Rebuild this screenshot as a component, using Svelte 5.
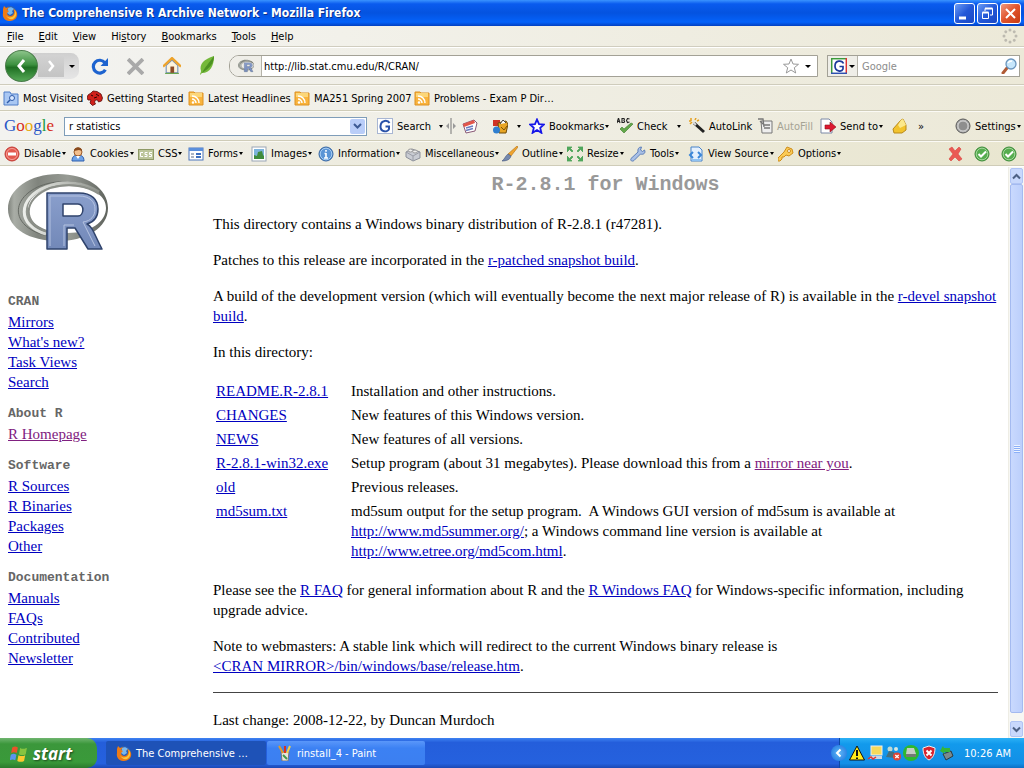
<script lang="ts">
	type Item = { icon?: string; label?: string; arrow?: boolean; muted?: boolean };

	const menus = ['File', 'Edit', 'View', 'History', 'Bookmarks', 'Tools', 'Help'];
	const menuKeys = [0, 0, 0, 2, 0, 0, 0];

	const bookmarks: Item[] = [
		{ icon: 'visited', label: 'Most Visited' },
		{ icon: 'dragon', label: 'Getting Started' },
		{ icon: 'feed', label: 'Latest Headlines' },
		{ icon: 'feed', label: 'MA251 Spring 2007' },
		{ icon: 'feed', label: 'Problems - Exam P Dir…' }
	];

	const googleTools: Item[] = [
		{ icon: 'google', label: 'Search' },
		{ arrow: true },
		{ icon: 'splitter' },
		{ icon: 'news' },
		{ icon: 'popup' },
		{ arrow: true },
		{ icon: 'star', label: 'Bookmarks', arrow: true },
		{ icon: 'check', label: 'Check' },
		{ arrow: true },
		{ icon: 'wand', label: 'AutoLink' },
		{ icon: 'fill', label: 'AutoFill', muted: true },
		{ icon: 'send', label: 'Send to', arrow: true },
		{ icon: 'marker' },
		{ label: '»' },
		{ icon: 'settings', label: 'Settings', arrow: true }
	];

	const devTools: Item[] = [
		{ icon: 'disable', label: 'Disable', arrow: true },
		{ icon: 'cookies', label: 'Cookies', arrow: true },
		{ icon: 'css', label: 'CSS', arrow: true },
		{ icon: 'forms', label: 'Forms', arrow: true },
		{ icon: 'images', label: 'Images', arrow: true },
		{ icon: 'info', label: 'Information', arrow: true },
		{ icon: 'misc', label: 'Miscellaneous', arrow: true },
		{ icon: 'outline', label: 'Outline', arrow: true },
		{ icon: 'resize', label: 'Resize', arrow: true },
		{ icon: 'tools', label: 'Tools', arrow: true },
		{ icon: 'source', label: 'View Source', arrow: true },
		{ icon: 'options', label: 'Options', arrow: true },
		{ icon: 'cross' },
		{ icon: 'ok' },
		{ icon: 'ok' }
	];

	const navGroups = [
		{ title: 'CRAN', links: ['Mirrors', "What's new?", 'Task Views', 'Search'] },
		{ title: 'About R', links: ['R Homepage'] },
		{ title: 'Software', links: ['R Sources', 'R Binaries', 'Packages', 'Other'] },
		{ title: 'Documentation', links: ['Manuals', 'FAQs', 'Contributed', 'Newsletter'] }
	];

	const trayIcons = ['warning', 'network', 'people', 'drive', 'shield', 'eject'];

	let url = $state('http://lib.stat.cmu.edu/R/CRAN/');
	let query = $state('r statistics');
	let search = $state('');

	const icons: Record<string, string> = {
		firefox:
			'<circle cx="8" cy="8" r="7" fill="#2b5fb4"/><path d="M6 3c2-1 4-1 6 1l-2 2 1 2-3 2-3-2z" fill="#79b8ee"/><path d="M1 4l1-3 2 2 3-1-2 3 2 1-2 2c0 3 4 4 6 2 2-2 1-5 0-6 3 1 5 4 4 7-1 4-5 5-8 5-4 0-7-4-6-8z" fill="#ee7b15"/><path d="M12 4c2 3 1 7-2 8-3 1-5 0-6-2 1 3 4 5 7 4 4-2 4-7 1-10z" fill="#fbc83a"/>',
		visited:
			'<path d="M1 2h6l1 2h7v11H1z" fill="#a9c7f3" stroke="#4e7cc7"/><circle cx="9" cy="8" r="2.5" fill="#d9e8ff" stroke="#2f5ba9"/><path d="M7 10l-3 3" stroke="#2f5ba9" stroke-width="1.5"/>',
		dragon:
			'<path d="M1 5l3-2 2-2 4 .5L14 4l1.500 4-1 3-3 1-1-2-2 0-1 2 1 2-3 1.500L3 13l1-3H1L0 8z" fill="#d0201a" stroke="#5d0b08" stroke-width=".8"/><path d="M9 4l3 2M4 5l2 1M7 8l3-1" stroke="#2a0302" fill="none"/>',
		feed: '<path d="M1 2h5l1 1h8v12H1z" fill="#f9b33c" stroke="#dc9224"/><path d="M2 3h12v4H2z" fill="#fcd678"/><path d="M4 6c4 0 7 3 7 7M4 9c2 0 4 2 4 4" stroke="#fff" stroke-width="1.5" fill="none"/><circle cx="5" cy="12.5" r="1.2" fill="#fff"/>',
		google:
			'<rect x=".5" y=".5" width="15" height="15" fill="#fff" stroke="#a8b6d3"/><path d="M12.500 5C11 2 4 1.500 3.500 8S11 14.500 12 11V8.500H8.500" fill="none" stroke="#2a52a8" stroke-width="2"/>',
		engine:
			'<rect x=".5" y=".5" width="15" height="15" fill="#fff"/><path d="M0 .7h16" stroke="#3b9a3b" stroke-width="1.500"/><path d="M.7 0v16" stroke="#3b9a3b" stroke-width="1.500"/><path d="M15.300 0v16" stroke="#d33" stroke-width="1.500"/><path d="M0 15.300h16" stroke="#2e50b0" stroke-width="1.500"/><path d="M12.500 5.500C11 2 4 2 4 8S11 14 12 11V8.500H8.500" fill="none" stroke="#1d3a9c" stroke-width="1.700"/>',
		splitter:
			'<path d="M8 0v16" stroke="#777"/><path d="M6 5v6L3 8zM10 5v6l3-3z" fill="#999"/>',
		news: '<path d="M1 6l11-4 3 3-2 8-9 2z" fill="#fff" stroke="#8a5a76"/><path d="M1 6l11-4 1 3-11 4z" fill="#e2564a"/><path d="M4 10l7-2M4 12.500l7-2" stroke="#6a7cc0" stroke-width="1.500"/>',
		popup:
			'<path d="M1 2h7v6H1z" fill="#cf3425"/><path d="M6 5l8-2 2 3-2 9H7z" fill="#e8a524" stroke="#6f4a08"/><path d="M8 6l3-4 3 3" fill="#fff" stroke="#444"/><circle cx="4.500" cy="12" r="3.500" fill="#2f7fd0"/><path d="M9 9l3 3 3-4" stroke="#7d5207" fill="none"/>',
		star: '<path d="M8 1.500l2 4.700 5 .3-3.800 3.300 1.200 5L8 12l-4.400 2.800 1.200-5L1 6.500l5-.3z" fill="#fff" stroke="#1616e8" stroke-width="1.800"/>',
		check:
			'<path d="M0 5L1.500 0 3 5M.7 3.500h2M5 .5v4h2l.6-1-.7-1 .5-1L7 .5zM12.500 1l-2-.5L9.500 2.500l1 2 2-.5" fill="none" stroke="#222" stroke-width="1.100"/><path d="M3 11l4 4 9-9-2-1-7 6-2-2z" fill="#63a84a" stroke="#3b7a2c" stroke-width=".6"/>',
		wand: '<path d="M5 5l10 9" stroke="#222" stroke-width="3"/><path d="M4 4l3 3" stroke="#ddd" stroke-width="2"/><path d="M2 0v3M1 6l2-2M7 0L6 2M0 3h2M8 3l2-1" stroke="#e5a01f" stroke-width="1.500"/>',
		fill: '<path d="M4 3h11v12H5z" fill="#eee" stroke="#777"/><path d="M1 1h5l1 8M3 3l3 3M7 7h6M7 10h6" stroke="#777" fill="none" stroke-width="1.300"/>',
		send: '<path d="M1 1h8l3 3v11H1z" fill="#fff" stroke="#7d89a6"/><path d="M5 7h5V4l6 5-6 5v-3H5z" fill="#dc1830" stroke="#90101c" stroke-width=".6"/>',
		marker:
			'<path d="M1 11l8-9 2-1 3 6v5l-4 3H2z" fill="#f2c32e" stroke="#b9891b"/><path d="M9 2l2-1 3 6-6 3-2-3z" fill="#fbe88c"/>',
		settings:
			'<circle cx="8" cy="8" r="7" fill="#b4b4b4" stroke="#555"/><circle cx="8" cy="8" r="5" fill="#8e8e8e" stroke="#d5d5d5"/>',
		disable:
			'<circle cx="8" cy="8" r="7" fill="#e4594e" stroke="#c23a33"/><circle cx="8" cy="8" r="5.500" fill="none" stroke="#f5a199"/><rect x="4" y="6.500" width="8" height="3" fill="#fff"/>',
		cookies:
			'<path d="M2 15c0-5 3-6 6-6s6 1 6 6z" fill="#6fa3e8" stroke="#2e5fae"/><circle cx="8" cy="6" r="4" fill="#f3bf8d" stroke="#9c5a27"/><path d="M4 5c0-5 8-5 8 0l-3-1z" fill="#8a4a1d"/><path d="M6 10l2 3 2-3" fill="#fff"/>',
		css: '<rect x=".5" y="3.500" width="15" height="10" fill="#bcc59a" stroke="#8f9a67"/><path d="M5 6.500H2.500v4H5M9.500 6.500H7v2h2v2H6.500M14 6.500h-2.500v2h2v2H11" fill="none" stroke="#fff"/>',
		forms:
			'<rect x="1" y="2" width="14" height="12" fill="#fff" stroke="#4c76bd"/><path d="M1 2h14v3H1z" fill="#5b8fdc"/><path d="M3 8h3M3 11h3" stroke="#5a6a88"/><path d="M8 8h5M8 11h5" stroke="#3f70bf" stroke-width="2"/>',
		images:
			'<rect x="1" y="1" width="14" height="14" fill="#fff" stroke="#9aa6b5"/><rect x="3" y="3" width="10" height="10" fill="#7db4dc"/><path d="M3 13V9l3 1 1-4 4-1 1 4 1 1v3z" fill="#3f8b3c"/>',
		info: '<circle cx="8" cy="8" r="7" fill="#5b95d6" stroke="#34639f"/><circle cx="8" cy="8" r="5.800" fill="none" stroke="#a8cdf2"/><path d="M8 4v1.800M8 7v5M6.500 7.500H8M6 12h4" stroke="#fff" stroke-width="1.600"/>',
		misc: '<path d="M1 6l6-3 8 3v6l-7 3-7-4z" fill="#c9ccd3" stroke="#8b8f99"/><path d="M1 6l7 4 7-4M8 10v5" fill="none" stroke="#9a9da6"/><ellipse cx="5.500" cy="4.500" rx="2.300" ry="1.500" fill="#eee" stroke="#999"/><ellipse cx="10" cy="5.500" rx="2.300" ry="1.500" fill="#eee" stroke="#999"/>',
		outline:
			'<path d="M15 0l1 1-7 9-3-2z" fill="#f0a52e" stroke="#b06d12" stroke-width=".6"/><path d="M6 8l3 2c-1 4-5 5-9 5 3-2 3-5 6-7z" fill="#7689ad" stroke="#44567d" stroke-width=".6"/>',
		resize:
			'<path d="M0 1h5L3.500 2.500 6 5 5 6 2.500 3.500 0 6zM16 1h-5l1.500 1.500L10 5l1 1 2.500-2.500L16 6zM0 15h5l-1.500-1.500L6 11l-1-1-2.500 2.500L0 10zM16 15h-5l1.500-1.500L10 11l1-1 2.500 2.500L16 10z" fill="#4fa65a" stroke="#4fa65a" stroke-width=".8"/>',
		tools:
			'<path d="M14.500 4l-2 1.500L10.500 4l1-3C8.500 1 7.500 3 8 6l-7 6.500c-1 2 1 3.500 3 2L10.500 8c3 1 5.500-1 4-4z" fill="#a9c0e6" stroke="#5d7fb8"/>',
		source:
			'<path d="M3 1h8l3 3v11H3z" fill="#e4f0fd" stroke="#4983c9"/><path d="M5 6L2 9l3 3M10 6l3 3-3 3" fill="none" stroke="#3a86d8" stroke-width="2"/><path d="M4 14h9" stroke="#8fc2f2" stroke-width="2"/>',
		options:
			'<path d="M9 1l5 2 1 4-4 3-3-1-2 2H4v2l-2 2H0v-3l6-6z" fill="#fbcb55" stroke="#ce8d1b"/><circle cx="11" cy="5" r="1.500" fill="#fff" stroke="#ce8d1b"/>',
		cross: '<path d="M2 3l3-2 3 4 4-4 2 2-3 5 4 5-3 2-4-4-4 4-2-2 4-5z" fill="#ea5a54" stroke="#d8423e" stroke-width=".6"/>',
		ok: '<circle cx="8" cy="8" r="7" fill="#56ad4f" stroke="#3b8a38"/><circle cx="8" cy="8" r="5.800" fill="none" stroke="#a3d69b"/><path d="M4.500 8l2.500 2.500 5-5" fill="none" stroke="#fff" stroke-width="2"/>',
		reload:
			'<path d="M13 4.500A6 6 0 1 0 13.500 11" fill="none" stroke="#1d63cf" stroke-width="3"/><path d="M9 7.500h7V0z" fill="#1d63cf"/>',
		stop: '<path d="M1 1l14 14M15 1L1 15" stroke="#a9a9a9" stroke-width="3.500"/>',
		home: '<path d="M3 8v7h11V8L8.500 3z" fill="#fdf3dc" stroke="#6f8db8"/><path d="M0 9l8.500-8L17 9" fill="none" stroke="#eda32b" stroke-width="2.200"/><rect x="7" y="9" width="3.500" height="6" fill="#8b4b28"/><path d="M2 15.500h13" stroke="#65a546"/>',
		leaf: '<path d="M15 0C5 3 0 8 2 15c0 2-1 2-1 4l2-2c8 0 12-7 12-17z" fill="#74b83a"/><path d="M15 0c0 7-4 12-12 17C6 11 10 7 15 0z" fill="#4c9122"/>',
		favstar:
			'<path d="M8 1l2 5 5.500.3-4.200 3.400 1.400 5.300L8 12l-4.700 3 1.400-5.300L.5 6.300 6 6z" fill="#fff" stroke="#999"/>',
		lens: '<path d="M6 10l-4 5" stroke="#b05b36" stroke-width="3" stroke-linecap="round"/><circle cx="10" cy="6" r="5" fill="#c6e6fb" stroke="#6b95bd" stroke-width="1.300"/><path d="M7 5c1-2 3-2 4-2" stroke="#fff" stroke-width="1.500" fill="none"/>',
		paint:
			'<path d="M4 7h8l-1 9H5z" fill="#e8e4da" stroke="#777"/><path d="M6 8L2 1" stroke="#e29b26" stroke-width="2"/><path d="M8 8V1" stroke="#d63226" stroke-width="2"/><path d="M10 8l3-7" stroke="#f0d04b" stroke-width="2"/><path d="M6 10l4 4" stroke="#3f9a4c" stroke-width="2"/>',
		windows:
			'<path d="M2 3c2-1 3-1 5 0L6 8c-2-1-3-1-5 0z" fill="#e9532a"/><path d="M9 3.500c2 1 3 1 6 0L14 9c-2 1-4 1-6 0z" fill="#86c440"/><path d="M.7 9.500c2-1 3-1 5 0l-1 5c-2-1-3-1-5 0z" fill="#5b94ef"/><path d="M7.500 10c2 1 4 1 6 0l-1 5c-2 1-4 1-6 0z" fill="#fcc92f"/>',
		warning:
			'<path d="M8 1l7.500 14H.5z" fill="#ffec1a" stroke="#111"/><path d="M8 5v6M8 12.500V14" stroke="#111" stroke-width="2"/>',
		network:
			'<rect x="4" y="1" width="11" height="9" fill="#f5d95a" stroke="#eee"/><path d="M3 11h12v3H3z" fill="#cfd6e0"/><path d="M1 14l3-2 2 2 3-2" stroke="#d33" fill="none" stroke-width="1.500"/>',
		people:
			'<circle cx="5" cy="4" r="2.500" fill="#bcd9d5"/><path d="M1 12l3-6 5 1 1 6z" fill="#44707d"/><circle cx="11" cy="4" r="2" fill="#d6e9e2"/><circle cx="12" cy="11.500" r="4" fill="#e14635"/><path d="M10.300 10l3.400 3M13.700 10l-3.400 3" stroke="#fff" stroke-width="1.300"/>',
		drive:
			'<circle cx="8" cy="8" r="8" fill="#2eb82e"/><path d="M4 3h7l2 6H3z" fill="#c7ccc5"/><path d="M3 9h10v3H3z" fill="#737a74"/>',
		shield:
			'<path d="M8 1l6 2c0 6-2 10-6 12C4 13 2 9 2 3z" fill="#d8232f" stroke="#eee"/><path d="M5.500 5.500l5 5M10.500 5.500l-5 5" stroke="#fff" stroke-width="2"/>',
		eject:
			'<path d="M4 9l8-3 2 5-7 4z" fill="#7b8a8d" stroke="#2d3a3d"/><path d="M1 6l3-5 1 2h6v4H5l1 2z" fill="#34b53a"/>'
	};
</script>

{#snippet icon(name: string, size = 16)}
	<svg width={size} height={size} viewBox="0 0 16 16" aria-hidden="true">
		{@html icons[name]}
	</svg>
{/snippet}

{#snippet tool(item: Item)}
	<button class="tool" class:muted={item.muted} aria-label={item.label ?? item.icon ?? 'More'}>
		{#if item.icon}{@render icon(item.icon)}{/if}
		{#if item.label || item.arrow}
			<span class="tool-text">{item.label ?? ''}{#if item.arrow}<i class="arrow"></i>{/if}</span>
		{/if}
	</button>
{/snippet}

{#snippet rLogo()}
	<defs>
		<linearGradient id="ring" x1="0" y1="0" x2="1" y2="0">
			<stop offset="0" stop-color="#7f837c" />
			<stop offset="0.06" stop-color="#a9ada6" />
			<stop offset="0.3" stop-color="#80847d" />
			<stop offset="0.6" stop-color="#979b94" />
			<stop offset="1" stop-color="#5f635d" />
		</linearGradient>
		<linearGradient id="shine" x1="0" y1="0" x2="1" y2="0">
			<stop offset="0" stop-color="#eceeea" />
			<stop offset="0.5" stop-color="#c2c5bf" />
			<stop offset="1" stop-color="#8d918a" />
		</linearGradient>
		<linearGradient id="face" x1="0" y1="0" x2="0" y2="1">
			<stop offset="0" stop-color="#8a9fcc" />
			<stop offset="1" stop-color="#7288b8" />
		</linearGradient>
	</defs>
	<path
		d="M50 0C22 0 0 15 0 35s22 32 50 32 50-13 50-33S78 0 50 0zM58 12c24 0 40 8 40 22S82 59 60 59 20 50 20 36 35 12 58 12z"
		fill="url(#ring)"
		fill-rule="evenodd"
	/>
	<path d="M40 62C3 54 1 25 32 12 50 5 74 6 92 18" fill="none" stroke="#666a64" />
	<path d="M38 60C9 52 9 24 38 13 56 6 76 8 91 18" fill="none" stroke="url(#shine)" stroke-width="3" />
	<path d="M40 58C14 50 14 25 42 14 60 9 78 11 91 20" fill="none" stroke="#8b8f88" stroke-width="2" />
	<path
		d="M39 19h32c13 0 19 7 19 16 0 8-4 13-11 15 6 3 7 10 15 25H80L67 54h-8v21H39zM55 30v12h15c6 0 7-12 0-12z"
		fill="url(#face)"
		stroke="#2f436c"
		stroke-width="1.500"
		stroke-linejoin="round"
		fill-rule="evenodd"
	/>
	<path d="M42 72V22h29c11 0 16 6 16 13 0 7-4 12-12 13l12 24M56 72V51h10" fill="none" stroke="#b4c2e0" />
{/snippet}

<div class="desktop">
	<header class="titlebar">
		{@render icon('firefox')}
		<h1>The Comprehensive R Archive Network - Mozilla Firefox</h1>
		<div class="window-buttons">
			<button aria-label="Minimize">
				<svg width="19" height="19" viewBox="0 0 19 19"><path d="M4 14h7" stroke="#fff" stroke-width="3" /></svg>
			</button>
			<button aria-label="Restore">
				<svg width="19" height="19" viewBox="0 0 19 19" fill="none" stroke="#fff">
					<path d="M7 7V4.500h7.500V11H12" /><path d="M7 4.500h7.500" stroke-width="2" />
					<path d="M4.500 8.500h6v6h-6z" /><path d="M4.500 8.500h6" stroke-width="2" />
				</svg>
			</button>
			<button class="close" aria-label="Close">
				<svg width="19" height="19" viewBox="0 0 19 19"><path d="M5 5l9 9M14 5l-9 9" stroke="#fff" stroke-width="2" /></svg>
			</button>
		</div>
	</header>

	<nav class="menubar">
		{#each menus as menu, i}
			<button>{menu.slice(0, menuKeys[i])}<u>{menu[menuKeys[i]]}</u>{menu.slice(menuKeys[i] + 1)}</button>
		{/each}
		<svg class="throbber" width="16" height="16" viewBox="0 0 16 16" fill="#bdbab0" aria-hidden="true">
			{#each [0, 45, 90, 135, 180, 225, 270, 315] as angle}
				<circle cx="8" cy="2" r="1.500" transform="rotate({angle} 8 8)" />
			{/each}
		</svg>
	</nav>

	<div class="navbar">
		<div class="history">
			<button class="back" aria-label="Back">
				<svg width="16" height="16" viewBox="0 0 16 16"><path d="M10 2L5 8l5 6" fill="none" stroke="#fff" stroke-width="3" /></svg>
			</button>
			<button class="forward" aria-label="Forward">
				<svg width="12" height="12" viewBox="0 0 12 12"><path d="M4 1l4 5-4 5" fill="none" stroke="#fff" stroke-width="2.500" /></svg>
			</button>
			<button class="recent" aria-label="Recent pages"><i class="arrow"></i></button>
		</div>
		<div class="nav-buttons">
			<button aria-label="Reload">{@render icon('reload', 17)}</button>
			<button aria-label="Stop">{@render icon('stop', 17)}</button>
			<button aria-label="Home">
				<svg width="18" height="18" viewBox="0 0 17 17" aria-hidden="true">{@html icons.home}</svg>
			</button>
			<button aria-label="Leaf">
				<svg width="16" height="20" viewBox="0 0 16 20" aria-hidden="true">{@html icons.leaf}</svg>
			</button>
		</div>
		<div class="location">
			<span class="site">
				<svg width="16" height="14" viewBox="0 0 100 78" aria-hidden="true">{@render rLogo()}</svg>
			</span>
			<input aria-label="Location" bind:value={url} />
			<button aria-label="Bookmark this page">{@render icon('favstar')}</button>
			<button class="drop" aria-label="Show history"><i class="arrow"></i></button>
		</div>
		<div class="search">
			<button class="engine" aria-label="Search engine">{@render icon('engine')}<i class="arrow"></i></button>
			<input aria-label="Web search" placeholder="Google" bind:value={search} />
			<button aria-label="Search">{@render icon('lens')}</button>
		</div>
	</div>

	<div class="bar bookmarks">
		{#each bookmarks as item}
			{@render tool(item)}
		{/each}
	</div>

	<div class="bar google">
		<a class="google-logo" href="#google" aria-label="Google">
			<span>G</span><span class="red">o</span><span class="yellow">o</span><span>g</span><span class="green">l</span><span class="red">e</span>
		</a>
		<div class="combo">
			<input aria-label="Google search" bind:value={query} />
			<button aria-label="Previous searches">
				<svg width="9" height="7" viewBox="0 0 9 7"><path d="M1 1l3.500 3.500L8 1" fill="none" stroke="#3d5a94" stroke-width="2" /></svg>
			</button>
		</div>
		{#each googleTools as item}
			{@render tool(item)}
		{/each}
	</div>

	<div class="bar dev">
		{#each devTools as item}
			{@render tool(item)}
		{/each}
	</div>

	<div class="viewport">
		<aside>
			<svg class="r-logo" width="100" height="78" viewBox="0 0 100 78" role="img" aria-label="R">
				{@render rLogo()}
			</svg>
			{#each navGroups as group}
				<section>
					<h3>{group.title}</h3>
					{#each group.links as link}
						<div><a href="#{link}" class:visited={link === 'R Homepage'}>{link}</a></div>
					{/each}
				</section>
			{/each}
		</aside>

		<main>
			<h2>R-2.8.1 for Windows</h2>
			<p>This directory contains a Windows binary distribution of R-2.8.1 (r47281).</p>
			<p>Patches to this release are incorporated in the <a href="#patched">r-patched snapshot build</a>.</p>
			<p>
				A build of the development version (which will eventually become the next major release of R)
				is available in the <a href="#devel">r-devel snapshot build</a>.
			</p>
			<p>In this directory:</p>
			<table>
				<tbody>
					<tr>
						<td><a href="#readme">README.R-2.8.1</a></td>
						<td>Installation and other instructions.</td>
					</tr>
					<tr>
						<td><a href="#changes">CHANGES</a></td>
						<td>New features of this Windows version.</td>
					</tr>
					<tr>
						<td><a href="#news">NEWS</a></td>
						<td>New features of all versions.</td>
					</tr>
					<tr>
						<td><a href="#exe">R-2.8.1-win32.exe</a></td>
						<td>
							Setup program (about 31 megabytes). Please download this from a
							<a class="visited" href="#mirror">mirror near you</a>.
						</td>
					</tr>
					<tr>
						<td><a href="#old">old</a></td>
						<td>Previous releases.</td>
					</tr>
					<tr>
						<td><a href="#md5">md5sum.txt</a></td>
						<td>
							md5sum output for the setup program.&nbsp; A Windows GUI version of md5sum is available at<br />
							<a href="#summer">http://www.md5summer.org/</a>; a Windows command line version is available at<br />
							<a href="#etree">http://www.etree.org/md5com.html</a>.
						</td>
					</tr>
				</tbody>
			</table>
			<p>
				Please see the <a href="#faq">R FAQ</a> for general information about R and the
				<a href="#winfaq">R Windows FAQ</a> for Windows-specific information, including upgrade advice.
			</p>
			<p>
				Note to webmasters: A stable link which will redirect to the current Windows binary release
				is<br />
				<a href="#release">&lt;CRAN MIRROR&gt;/bin/windows/base/release.htm</a>.
			</p>
			<hr />
			<p class="changed">Last change: 2008-12-22, by Duncan Murdoch</p>
		</main>

		<div class="scrollbar" aria-hidden="true">
			<span class="step">
				<svg width="9" height="7" viewBox="0 0 9 7"><path d="M1 5.500L4.500 2 8 5.500" fill="none" stroke="#4d6185" stroke-width="2" /></svg>
			</span>
			<span class="thumb"></span>
			<span class="step">
				<svg width="9" height="7" viewBox="0 0 9 7"><path d="M1 1.500L4.500 5 8 1.500" fill="none" stroke="#4d6185" stroke-width="2" /></svg>
			</span>
		</div>
	</div>

	<footer class="taskbar">
		<button class="start">{@render icon('windows', 18)}start</button>
		<div class="tasks">
			<button class="task active">{@render icon('firefox')}The Comprehensive …</button>
			<button class="task">{@render icon('paint')}rinstall_4 - Paint</button>
		</div>
		<div class="tray">
			<button class="expand" aria-label="Show hidden icons">
				<svg width="16" height="16" viewBox="0 0 16 16"><path d="M9.500 4.500L6 8l3.500 3.500" fill="none" stroke="#fff" stroke-width="2" /></svg>
			</button>
			{#each trayIcons as name}
				{@render icon(name)}
			{/each}
			<time>10:26 AM</time>
		</div>
	</footer>
</div>

<style>
	:global(body) {
		margin: 0;
	}

	.desktop {
		display: flex;
		flex-direction: column;
		min-height: 100vh;
		font-family: 'DejaVu Sans Condensed', 'Noto Sans', sans-serif;
		font-size: 11px;
		color: #000;
		background: #fff;
		white-space: nowrap;
	}

	button,
	input {
		margin: 0;
		padding: 0;
		border: 0;
		background: none;
		font: inherit;
		color: inherit;
		min-width: 0;
	}

	input {
		outline: none;
	}

	svg {
		display: block;
		flex: none;
	}

	.arrow {
		display: block;
		flex: none;
		width: 0;
		margin: 0 auto;
		border: 3px solid transparent;
		border-top-color: #000;
		border-bottom: 0;
	}

	/* window frame */
	.titlebar {
		display: flex;
		align-items: center;
		gap: 4px;
		box-sizing: border-box;
		height: 26px;
		padding: 0 3px 0 2px;
		color: #fff;
		background: linear-gradient(#3a93ff, #0a5bee 15%, #0453e0 50%, #0462fa 85%, #0340c0);
	}

	h1 {
		flex: 1;
		margin: 0;
		font-size: 12px;
		font-weight: bold;
		text-shadow: 1px 1px #0a2f8c;
	}

	.window-buttons {
		display: flex;
		gap: 2px;
	}

	.window-buttons button {
		border: 1px solid #fff;
		border-radius: 3px;
		background: linear-gradient(135deg, #6b9cf5, #2358d8 50%, #1a48c4);
	}

	.window-buttons .close {
		background: linear-gradient(135deg, #f09a80, #e0532b 50%, #c63a12);
	}

	.menubar {
		display: flex;
		align-items: center;
		gap: 15px;
		height: 20px;
		padding: 0 6px 0 7px;
		border-bottom: 1px solid #d0cdbf;
		background: linear-gradient(90deg, #f5f5f3, #ece9d8);
	}

	.throbber {
		margin-left: auto;
	}

	.navbar {
		display: flex;
		align-items: center;
		box-sizing: border-box;
		height: 38px;
		padding: 0 4px 0 5px;
		border-top: 1px solid #fff;
		border-bottom: 1px solid #cfccbc;
		background: linear-gradient(90deg, #f3f3f1, #ece9d8);
	}

	.history {
		display: flex;
		align-items: center;
		height: 26px;
		margin-right: 12px;
		border-radius: 16px 10px 10px 16px;
		background: linear-gradient(#cfcfcf, #e6e6e6);
	}

	.back {
		display: grid;
		place-items: center;
		width: 33px;
		height: 32px;
		border: 1px solid #4a7d4a;
		border-radius: 50%;
		background: linear-gradient(#8cc48a, #3d9140 45%, #1f7023 55%, #56a957);
	}

	.forward {
		display: grid;
		place-items: center;
		width: 26px;
		height: 22px;
		background: linear-gradient(#d2d2d2, #c4c4c4);
	}

	.recent {
		width: 15px;
	}

	.nav-buttons {
		display: grid;
		grid-template-columns: repeat(4, 36px);
		align-items: center;
		width: 138px;
	}

	.location,
	.search {
		display: flex;
		align-items: center;
		box-sizing: border-box;
		height: 22px;
		border: 1px solid #a3a196;
		background: #fff;
	}

	.location {
		flex: 1;
		margin-right: 9px;
		border-radius: 10px 0 0 10px;
	}

	.site {
		display: grid;
		place-items: center;
		width: 31px;
		height: 20px;
		border-right: 1px solid #b5b3a9;
		border-radius: 9px 0 0 9px;
		background: #efeee8;
	}

	.location input {
		flex: 1;
		padding-left: 2px;
	}

	.drop {
		width: 18px;
	}

	.search {
		width: 193px;
	}

	.search .engine {
		display: flex;
		align-items: center;
		width: 30px;
		height: 20px;
		padding-left: 3px;
		border-right: 1px solid #b5b3a9;
		background: #efeee8;
	}

	.search input {
		flex: 1;
		padding-left: 4px;
	}

	.search input::placeholder {
		color: #8c8c8c;
	}

	.search button:last-child {
		margin-right: 2px;
	}

	/* toolbars */
	.bar {
		display: grid;
		align-items: center;
		box-sizing: border-box;
		padding-left: 4px;
		border-top: 1px solid #fbfaf5;
		border-bottom: 1px solid #cfccb8;
		background: linear-gradient(90deg, #f3f3f0, #ece9d8);
	}

	.bookmarks {
		grid-template-columns: 84px 101px 106px 120px 1fr;
		height: 26px;
		padding-left: 3px;
	}

	.google {
		grid-template-columns: 60px 313px 61px 5px 19px 30px 24px 13px 88px 59px 13px 68px 63px 72px 26px 1fr 69px;
		height: 30px;
	}

	.dev {
		grid-template-columns: 66px 68px 50px 63px 67px 87px 97px 65px 63px 58px 90px 1fr 27px 27px 23px;
		height: 25px;
		background: linear-gradient(90deg, #f0efe8, #e9e6d0);
	}

	.tool {
		display: flex;
		align-items: center;
		gap: 4px;
		white-space: nowrap;
	}

	.tool-text {
		display: flex;
		align-items: center;
	}

	.tool .arrow {
		border-width: 3px 2px 0;
		margin-left: 1px;
	}

	.muted {
		color: #a5a394;
	}

	.google-logo {
		display: flex;
		font: 17px 'Liberation Serif', serif;
		text-decoration: none;
		color: #2a56c6;
	}

	.google-logo .red {
		color: #d62d20;
	}

	.google-logo .yellow {
		color: #e8a80c;
	}

	.google-logo .green {
		color: #1a9a3c;
	}

	.combo {
		display: flex;
		align-items: center;
		box-sizing: border-box;
		height: 19px;
		margin-right: 10px;
		border: 1px solid #7f9db9;
		background: #fff;
	}

	.combo input {
		flex: 1;
		padding-left: 4px;
	}

	.combo button {
		display: grid;
		place-items: center;
		width: 15px;
		height: 15px;
		margin-right: 1px;
		border-radius: 2px;
		background: #b9cdf8;
	}

	/* page */
	.viewport {
		display: grid;
		grid-template-columns: 205px 1fr 16px;
		flex: 1;
		box-sizing: border-box;
		border-top: 1px solid #fff;
		font-family: 'Liberation Serif', serif;
		font-size: 15px;
		line-height: 20px;
		white-space: normal;
	}

	aside {
		padding: 7px 0 0 8px;
	}

	.r-logo {
		margin-bottom: 40px;
	}

	section {
		margin-bottom: 12px;
	}

	h3 {
		margin: 0;
		font: bold 13px/20px 'Liberation Mono', monospace;
		color: #666;
	}

	a {
		color: #0000c0;
	}

	.visited {
		color: #802080;
	}

	main {
		padding: 6px 10px 6px 8px;
	}

	h2 {
		margin: 0 0 17px;
		font: bold 20px/24px 'Liberation Mono', monospace;
		text-align: center;
		color: #999;
	}

	p {
		margin: 0 0 16px;
	}

	table {
		margin-bottom: 16px;
		border-spacing: 2px;
	}

	td {
		padding: 1px;
		vertical-align: top;
	}

	td:first-child {
		width: 131px;
	}

	hr {
		margin: 0 0 17px;
		border: 0;
		border-top: 1px solid #444;
	}

	.changed {
		margin: 0;
	}

	.scrollbar {
		display: flex;
		flex-direction: column;
		padding: 1px;
		border-left: 1px solid #eeede5;
		background: #f7f7f3;
	}

	.step {
		display: grid;
		place-items: center;
		height: 14px;
		border: 1px solid #b0c4f4;
		border-radius: 2px;
		background: #c8d8fc;
	}

	.thumb {
		flex: 1;
		margin-bottom: 8px;
		border: 1px solid #a4baf0;
		border-radius: 2px;
		background:
			repeating-linear-gradient(#eef4fe 0 1px, #8cb0f8 1px 2px) center / 6px 8px no-repeat,
			linear-gradient(90deg, #c9d9fe, #bccffb);
	}

	/* taskbar */
	.taskbar {
		display: flex;
		align-items: center;
		height: 30px;
		color: #fff;
		background: linear-gradient(#3d82f2, #245edb 15%, #2561de 85%, #1b48b4);
	}

	.start {
		display: flex;
		align-items: center;
		gap: 5px;
		width: 97px;
		height: 30px;
		padding-left: 10px;
		border-radius: 0 10px 10px 0;
		font: italic bold 17px 'Open Sans', sans-serif;
		text-shadow: 1px 1px 2px #1c4a1c;
		background: linear-gradient(#6fb56f, #3b973b 20%, #3a9a3a 80%, #2a7a2c);
	}

	.tasks {
		display: grid;
		grid-template-columns: 160px 158px;
		gap: 1px;
		flex: 1;
		padding-left: 9px;
	}

	.task {
		display: flex;
		align-items: center;
		gap: 4px;
		height: 24px;
		padding-left: 10px;
		border-radius: 2px;
		background: linear-gradient(#5a97fa, #3c81f3 30%, #3c7ff0);
	}

	.task.active {
		background: #1e52b7;
	}

	.tray {
		display: flex;
		align-items: center;
		gap: 2px;
		height: 30px;
		padding-right: 13px;
		border-left: 1px solid #0b4aa8;
		background: linear-gradient(#2bb0f5, #129aec 20%, #138fe6 85%, #0c6fc4);
	}

	.expand {
		margin-left: -9px;
		border-radius: 50%;
		background: radial-gradient(#5fb8f8, #1a70dc);
	}

	time {
		padding-left: 7px;
	}
</style>
